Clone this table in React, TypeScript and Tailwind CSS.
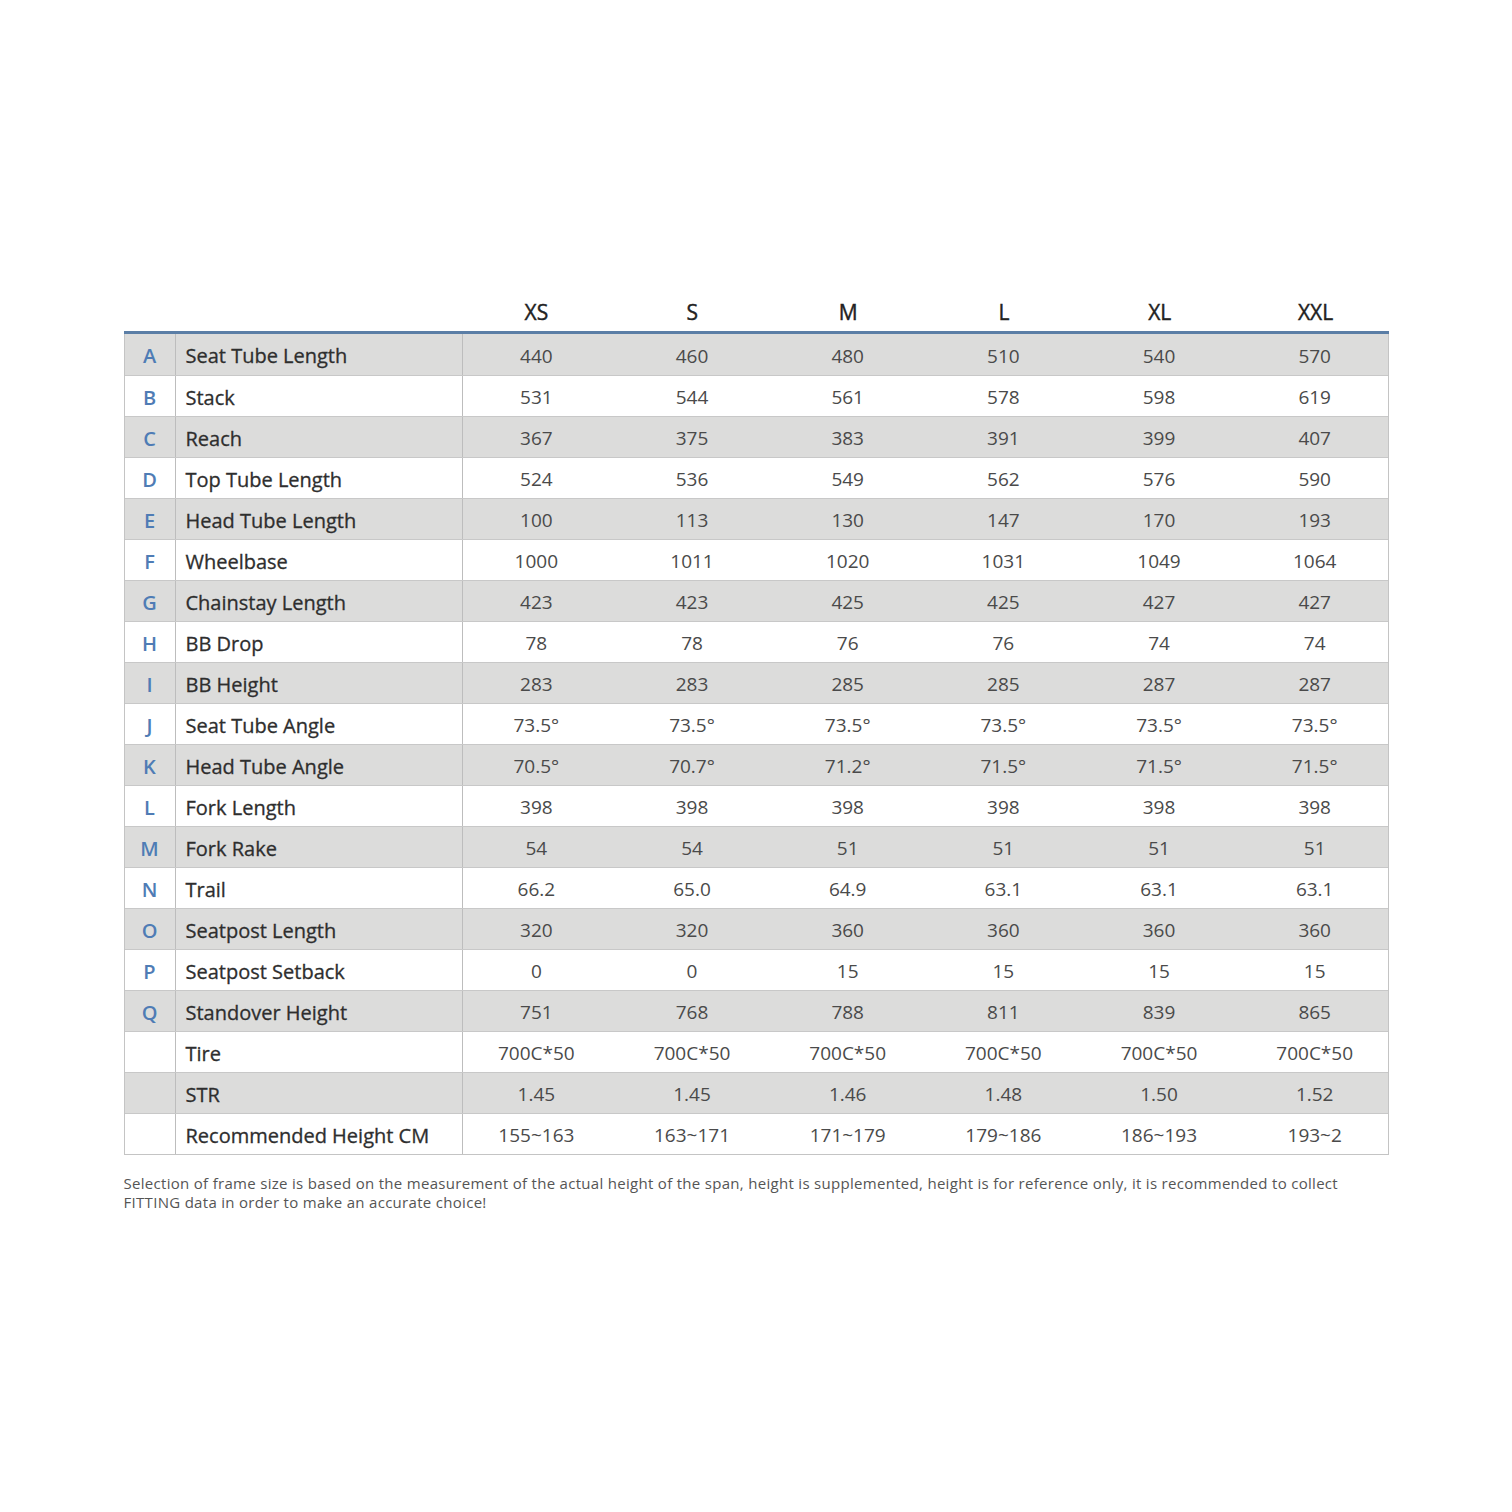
import React from 'react';

type Row = { letter: string; name: string; values: string[] };

const sizes = ['XS', 'S', 'M', 'L', 'XL', 'XXL'];

const rows: Row[] = [
  { letter: 'A', name: 'Seat Tube Length', values: ['440', '460', '480', '510', '540', '570'] },
  { letter: 'B', name: 'Stack', values: ['531', '544', '561', '578', '598', '619'] },
  { letter: 'C', name: 'Reach', values: ['367', '375', '383', '391', '399', '407'] },
  { letter: 'D', name: 'Top Tube Length', values: ['524', '536', '549', '562', '576', '590'] },
  { letter: 'E', name: 'Head Tube Length', values: ['100', '113', '130', '147', '170', '193'] },
  { letter: 'F', name: 'Wheelbase', values: ['1000', '1011', '1020', '1031', '1049', '1064'] },
  { letter: 'G', name: 'Chainstay Length', values: ['423', '423', '425', '425', '427', '427'] },
  { letter: 'H', name: 'BB Drop', values: ['78', '78', '76', '76', '74', '74'] },
  { letter: 'I', name: 'BB Height', values: ['283', '283', '285', '285', '287', '287'] },
  { letter: 'J', name: 'Seat Tube Angle', values: ['73.5°', '73.5°', '73.5°', '73.5°', '73.5°', '73.5°'] },
  { letter: 'K', name: 'Head Tube Angle', values: ['70.5°', '70.7°', '71.2°', '71.5°', '71.5°', '71.5°'] },
  { letter: 'L', name: 'Fork Length', values: ['398', '398', '398', '398', '398', '398'] },
  { letter: 'M', name: 'Fork Rake', values: ['54', '54', '51', '51', '51', '51'] },
  { letter: 'N', name: 'Trail', values: ['66.2', '65.0', '64.9', '63.1', '63.1', '63.1'] },
  { letter: 'O', name: 'Seatpost Length', values: ['320', '320', '360', '360', '360', '360'] },
  { letter: 'P', name: 'Seatpost Setback', values: ['0', '0', '15', '15', '15', '15'] },
  { letter: 'Q', name: 'Standover Height', values: ['751', '768', '788', '811', '839', '865'] },
  { letter: '', name: 'Tire', values: ['700C*50', '700C*50', '700C*50', '700C*50', '700C*50', '700C*50'] },
  { letter: '', name: 'STR', values: ['1.45', '1.45', '1.46', '1.48', '1.50', '1.52'] },
  { letter: '', name: 'Recommended Height CM', values: ['155~163', '163~171', '171~179', '179~186', '186~193', '193~2'] },
];

export default function App() {
  return (
    <div className="min-h-[1512px] w-full bg-white pt-[292px] font-['Open_Sans',sans-serif]">
      <div className="mx-auto w-[1265px]">
        {/* Header */}
        <div className="flex h-[39px] items-center pt-[2px] text-[21px] text-[#222]">
          <div className="w-[339px]" />
          <div className="ml-[-4px] mr-[-5px] flex flex-1">
            {sizes.map(s => (
              <div key={s} className="flex-1 text-center [-webkit-text-stroke:0.4px_#222]">{s}</div>
            ))}
          </div>
        </div>
        <div className="h-[3px] bg-[#5b7ea6]" />

        {/* Body */}
        <div className="border-x border-b border-[#c4c4c4]">
          {rows.map((r, i) => (
            <div
              key={r.name}
              className={`flex h-[41px] items-center ${
                i % 2 === 0 ? 'bg-[#dcdcdb]' : 'bg-white'
              } ${i > 0 ? 'border-t border-[#c8c8c8]' : ''}`}
            >
              <div className="flex h-full w-[51px] items-center justify-center border-r border-[#bdbdbd] pt-[3px] text-[20px] font-semibold text-[#4f7cb5]">
                {r.letter}
              </div>
              <div className="flex h-full w-[287px] items-center border-r border-[#bdbdbd] pl-[10px] pt-[3px] text-[20px] text-[#2e2e2e] [-webkit-text-stroke:0.3px_#2e2e2e]">
                {r.name}
              </div>
              <div className="ml-[-4px] mr-[-5px] flex flex-1 pt-[3px]">
                {r.values.map((v, j) => (
                  <div key={j} className="flex-1 text-center text-[19px] text-[#4a4a4a]">
                    {v}
                  </div>
                ))}
              </div>
            </div>
          ))}
        </div>

        <p className="mt-[19px] w-[1230px] text-[15px] leading-[19px] tracking-[0.3px] text-[#555]">
          Selection of frame size is based on the measurement of the actual height of the span, height is supplemented, height is for reference only, it is recommended to collect FITTING data in order to make an accurate choice!
        </p>
      </div>
    </div>
  );
}
